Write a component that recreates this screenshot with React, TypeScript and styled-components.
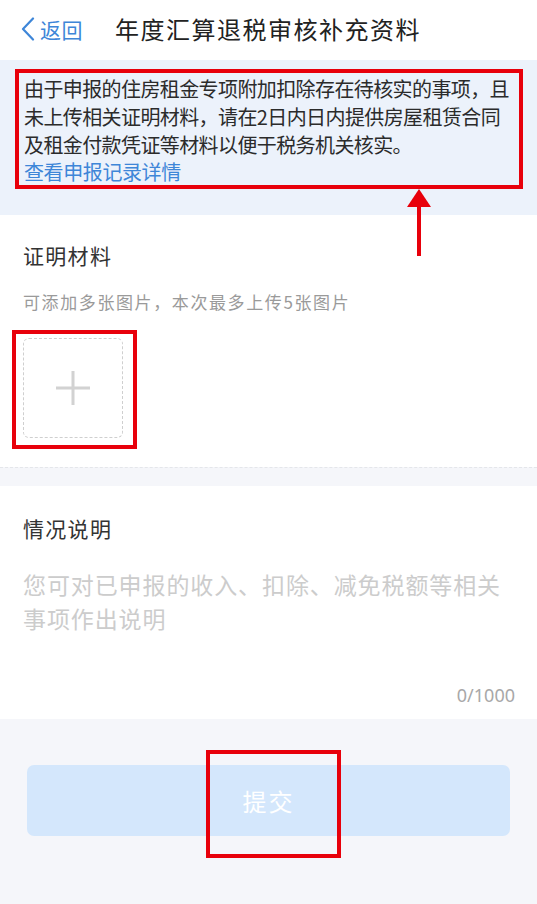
import React from "react";
import styled, { createGlobalStyle } from "styled-components";

const GlobalStyle = createGlobalStyle`
  html, body {
    margin: 0;
    padding: 0;
    background: #f5f6fa;
  }
  body {
    font-family: "Noto Sans CJK SC", "Noto Sans", sans-serif;
  }
`;

const noticeLines = [
  "由于申报的住房租金专项附加扣除存在待核实的事项，且",
  "未上传相关证明材料，请在2日内日内提供房屋租赁合同",
  "及租金付款凭证等材料以便于税务机关核实。",
];

const App = () => {
  return (
    <Page>
      <GlobalStyle />
      <Header>
        <Back>
          <svg width="14" height="24" viewBox="0 0 14 24">
            <polyline
              points="12,1.5 2,12 12,22.5"
              fill="none"
              stroke="#3e86d8"
              strokeWidth="2.2"
              strokeLinecap="round"
              strokeLinejoin="round"
            />
          </svg>
          <span>返回</span>
        </Back>
        <Title>年度汇算退税审核补充资料</Title>
      </Header>

      <NoticeBand>
        <Marked>
          {noticeLines.map((line) => (
            <NoticeLine key={line}>{line}</NoticeLine>
          ))}
          <Link>查看申报记录详情</Link>
        </Marked>
      </NoticeBand>

      <Section pt={25} pb={18}>
        <SectionTitle>证明材料</SectionTitle>
        <Hint>可添加多张图片，本次最多上传5张图片</Hint>
        <UploadMark>
          <UploadBox>
            <svg width="34" height="34" viewBox="0 0 34 34">
              <path d="M17 0 V34 M0 17 H34" stroke="#d2d2d2" strokeWidth="3" />
            </svg>
          </UploadBox>
        </UploadMark>
      </Section>

      <Gap />

      <Section pt={27} pb={12}>
        <SectionTitle>情况说明</SectionTitle>
        <Placeholder>您可对已申报的收入、扣除、减免税额等相关事项作出说明</Placeholder>
        <Counter>0/1000</Counter>
      </Section>

      <Footer>
        <Submit>
          提交
          <ButtonMark />
        </Submit>
      </Footer>

      <Arrow>
        <svg width="24" height="68" viewBox="0 0 24 68">
          <polygon points="12,0 0,18 24,18" fill="#e8000b" />
          <rect x="10" y="16" width="4" height="51" fill="#e8000b" />
        </svg>
      </Arrow>
    </Page>
  );
};

export default App;

const Page = styled.div`
  position: relative;
  width: 537px;
  min-height: 904px;
  background: #f5f6fa;
  overflow: hidden;
`;

const Header = styled.div`
  height: 60px;
  background: #ffffff;
  display: flex;
  align-items: center;
  padding-left: 21px;
`;

const Back = styled.div`
  display: flex;
  align-items: center;
  gap: 5px;
  margin-top: -3px;
  color: #3e86d8;
  font-size: 21px;
  letter-spacing: 0.5px;
`;

const Title = styled.div`
  margin-left: 32px;
  margin-top: -3px;
  font-size: 24px;
  letter-spacing: 1.5px;
  color: #222222;
`;

const NoticeBand = styled.div`
  background: #ecf2fb;
  padding: 9px 14px 26px 15px;
`;

const Marked = styled.div`
  border: 4px solid #e8000b;
  padding: 2px 5px 0 5px;
`;

const NoticeLine = styled.div`
  font-size: 20px;
  line-height: 28px;
  letter-spacing: -0.6px;
  white-space: nowrap;
  color: #2b2b2b;
`;

const Link = styled.div`
  font-size: 20px;
  line-height: 26px;
  letter-spacing: -0.4px;
  color: #3e86d8;
`;

const Section = styled.div<{ pt: number; pb: number }>`
  background: #ffffff;
  padding: ${(p) => p.pt}px 23px ${(p) => p.pb}px 23px;
  display: flex;
  flex-direction: column;
`;

const SectionTitle = styled.div`
  font-size: 21px;
  line-height: 30px;
  letter-spacing: 1.3px;
  color: #333333;
`;

const Hint = styled.div`
  margin-top: 20px;
  font-size: 17px;
  line-height: 24px;
  letter-spacing: 1.6px;
  color: #9a9a9a;
`;

const UploadMark = styled.div`
  align-self: flex-start;
  margin: 16px 0 0 -11px;
  border: 4px solid #e8000b;
  padding: 4px 10px 7px 7px;
`;

const UploadBox = styled.div`
  width: 98px;
  height: 98px;
  border: 1px dashed #cfcfcf;
  border-radius: 6px;
  display: flex;
  align-items: center;
  justify-content: center;
`;

const Gap = styled.div`
  height: 18px;
  border-top: 1px dashed #e4e6ea;
  background: #f5f6fa;
`;

const Placeholder = styled.div`
  margin-top: 24px;
  font-size: 23px;
  line-height: 34px;
  letter-spacing: 0.9px;
  color: #cccccc;
`;

const Counter = styled.div`
  margin-top: 48px;
  align-self: flex-end;
  margin-right: -1px;
  font-family: "Noto Sans", sans-serif;
  font-size: 18px;
  line-height: 24px;
  color: #a8a8a8;
`;

const Footer = styled.div`
  padding: 46px 27px 0 27px;
`;

const Submit = styled.div`
  position: relative;
  height: 71px;
  border-radius: 7px;
  background: #d4e7fc;
  color: #ffffff;
  font-size: 24px;
  letter-spacing: 2px;
  display: flex;
  align-items: center;
  justify-content: center;
`;

const ButtonMark = styled.div`
  position: absolute;
  left: 179px;
  top: -15px;
  width: 135px;
  height: 108px;
  box-sizing: border-box;
  border: 4px solid #e8000b;
`;

const Arrow = styled.div`
  position: absolute;
  left: 407px;
  top: 189px;
  line-height: 0;
`;
